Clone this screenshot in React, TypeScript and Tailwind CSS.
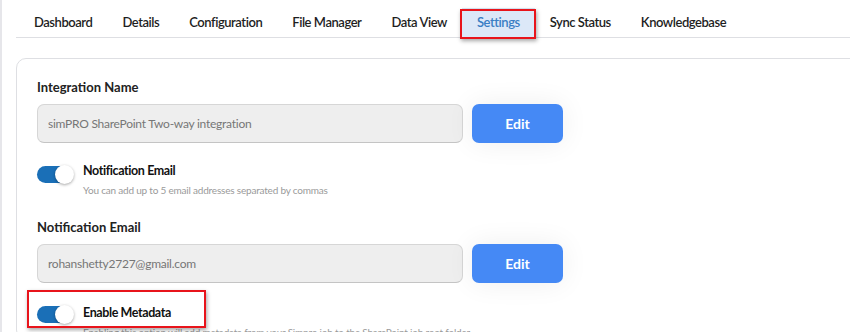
import React from "react";

const tabs = ["Dashboard", "Details", "Configuration", "File Manager", "Data View", "Settings", "Sync Status", "Knowledgebase"];

function Toggle() {
  return (
    <div className="relative w-[36px] h-[17px] rounded-full bg-[#1a6fb7] shrink-0">
      <div className="absolute right-[-1px] top-[-1px] w-[19px] h-[19px] rounded-full bg-white shadow-[0_1px_3px_rgba(0,0,0,0.35)]" />
    </div>
  );
}

function InputRow({ value }: { value: string }) {
  return (
    <div className="flex items-center gap-[9px]">
      <div className="w-[426px] h-[39px] rounded-[7px] bg-[#eeeeee] border border-[#d6d6d6] border-b-[#c4c4c4] flex items-center pl-[10px] text-[12px] tracking-[-0.25px] text-[#767676]">
        {value}
      </div>
      <button className="w-[91px] h-[39px] rounded-[7px] bg-[#4589f5] text-white text-[14px] font-bold shadow-[0_0_28px_rgba(0,0,0,0.07)]">
        Edit
      </button>
    </div>
  );
}

export default function App() {
  return (
    <div className="w-[850px] h-[332px] overflow-hidden bg-white border-l-2 border-[#e6e6ea]" style={{ fontFamily: "Lato, 'Noto Sans', sans-serif" }}>
      <div className="ml-[14px] pt-[8px] flex border-b border-[#dedfe3] h-[38px]">
        <div className="flex pl-[3px]">
          {tabs.map((t) => {
            const active = t === "Settings";
            return (
              <div
                key={t}
                className={
                  "relative h-[29px] px-[15px] flex items-center text-[13px] tracking-[-0.45px] font-semibold " +
                  (active ? "bg-[#dce8f8] text-[#3a7ec4]" : "text-[#1e1e1e]")
                }
              >
                {t}
                {active && (
                  <div className="absolute left-[-2px] right-[-1px] top-[1px] bottom-[-2px] border-2 border-[#e8141b] shadow-[1px_2px_4px_rgba(0,0,0,0.35)]" />
                )}
              </div>
            );
          })}
        </div>
      </div>

      <div className="ml-[14px] mt-[20px] w-[900px] border border-[#dedfe3] rounded-[10px] pt-[20px] pl-[20px]">
        <div className="text-[13px] font-bold text-[#222] leading-[16px] mb-[9px]">Integration Name</div>
        <InputRow value="simPRO SharePoint Two-way integration" />

        <div className="flex mt-[19px]">
          <div className="mt-[4px]"><Toggle /></div>
          <div className="ml-[10px]">
            <div className="text-[12.5px] tracking-[-0.4px] font-bold text-[#111] leading-[18px]">Notification Email</div>
            <div className="text-[10px] tracking-[-0.2px] text-[#9a9a9a] leading-[14px] mt-[3px]">You can add up to 5 email addresses separated by commas</div>
          </div>
        </div>

        <div className="text-[13px] font-bold text-[#222] leading-[16px] mt-[22px] mb-[9px]">Notification Email</div>
        <InputRow value="rohanshetty2727@gmail.com" />

        <div className="relative flex mt-[21px]">
          <div className="mt-[2px]"><Toggle /></div>
          <div className="ml-[10px]">
            <div className="text-[12.5px] tracking-[-0.4px] font-bold text-[#111] leading-[18px]">Enable Metadata</div>
            <div className="text-[10px] tracking-[-0.2px] text-[#9a9a9a] leading-[14px] mt-[3px]">Enabling this option will add metadata from your Simpro job to the SharePoint job root folder</div>
          </div>
          <div className="absolute left-[-10px] top-[-14px] w-[179px] h-[38px] border-2 border-[#e8141b] shadow-[1px_2px_4px_rgba(0,0,0,0.35)]" />
        </div>
      </div>
    </div>
  );
}
